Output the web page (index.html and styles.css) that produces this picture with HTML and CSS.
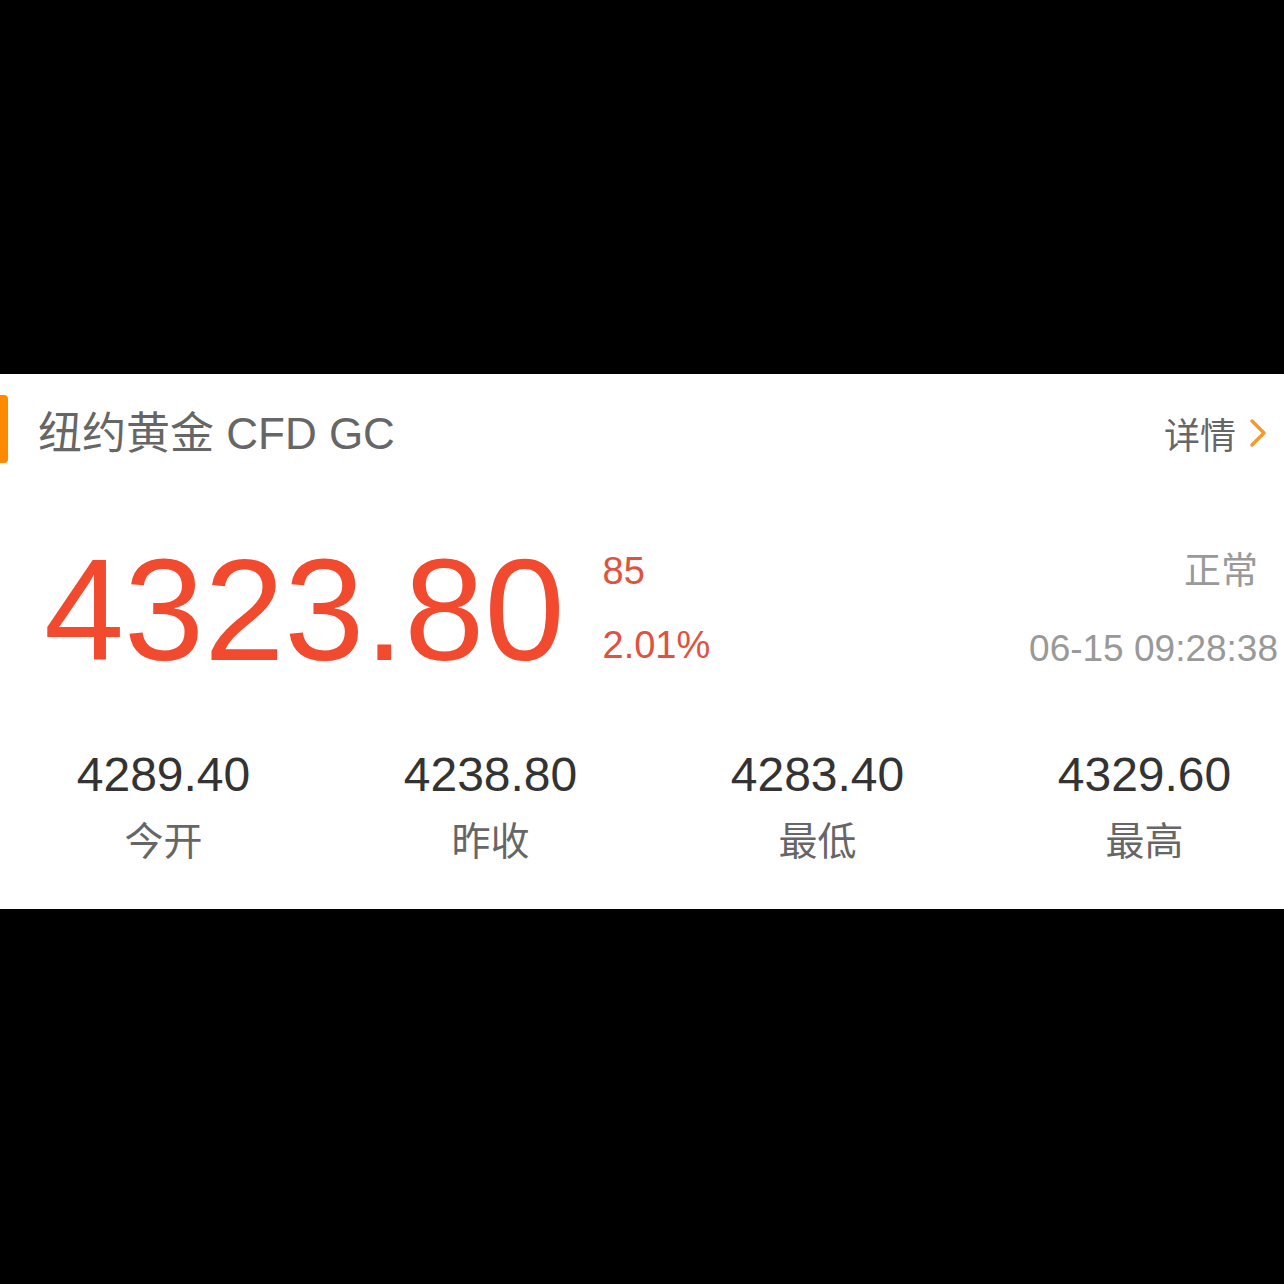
FILE: index.html
```html
<!DOCTYPE html>
<html lang="zh-CN">
<head>
  <meta charset="UTF-8" />
  <title>纽约黄金 CFD GC</title>
  <link rel="stylesheet" href="styles.css">
</head>
<body>
  <div class="card">
    <div class="head">
      <div class="bar"></div>
      <div class="title">纽约黄金 CFD GC</div>
      <div class="more">详情
        <svg class="chev" width="20" height="30" viewBox="0 0 20 30">
          <path d="M4 3 L16 15 L4 27" fill="none" stroke="#f39a2c" stroke-width="3.5" stroke-linecap="round" stroke-linejoin="round"/>
        </svg>
      </div>
    </div>

    <div class="quote">
      <div class="price">4323.80</div>
      <div class="change">
        <div>85</div>
        <div>2.01%</div>
      </div>
      <div class="status">
        <div class="state">正常</div>
        <div class="time">06-15 09:28:38</div>
      </div>
    </div>

    <div class="stats">
      <div class="stat"><div class="num">4289.40</div><div class="label">今开</div></div>
      <div class="stat"><div class="num">4238.80</div><div class="label">昨收</div></div>
      <div class="stat"><div class="num">4283.40</div><div class="label">最低</div></div>
      <div class="stat"><div class="num">4329.60</div><div class="label">最高</div></div>
    </div>
  </div>
</body>
</html>
```

FILE: styles.css
```css
body {
  margin: 0;
  background: #000;
  font-family: "Liberation Sans", "Noto Sans CJK SC", sans-serif;
  overflow: hidden;
}

.card {
  margin-top: 374px;
  height: 535px;
  background: #fff;
  box-sizing: border-box;
  padding-top: 21px;
}

.head {
  display: flex;
  align-items: center;
  height: 68px;
}

.bar {
  width: 8px;
  height: 68px;
  background: #ff8a00;
  border-radius: 0 4px 4px 0;
}

.title {
  margin-left: 30px;
  margin-top: 2px;
  font-size: 44px;
  color: #666;
  flex: 1;
}

.more {
  display: flex;
  align-items: center;
  font-size: 36px;
  color: #666;
  margin-right: 16px;
  margin-top: 8px;
}

.chev {
  margin-left: 12px;
}

.quote {
  display: flex;
  margin-top: 78px;
  padding-left: 44px;
}

.price {
  font-size: 144px;
  line-height: 140px;
  color: #f24a2e;
}

.change {
  margin-left: 38px;
  margin-top: 9px;
  font-size: 38px;
  color: #e0523c;
  display: flex;
  flex-direction: column;
  gap: 31px;
}

.status {
  margin-left: auto;
  text-align: right;
  color: #999;
  font-size: 37px;
  margin-right: 6px;
}

.state {
  margin-right: 20px;
}

.time {
  margin-top: 33px;
}

.stats {
  display: grid;
  grid-template-columns: repeat(4, 327px);
  margin-top: 66px;
  text-align: center;
}

.num {
  font-size: 48px;
  color: #333;
}

.label {
  font-size: 39px;
  color: #666;
  margin-top: 8px;
}
```
